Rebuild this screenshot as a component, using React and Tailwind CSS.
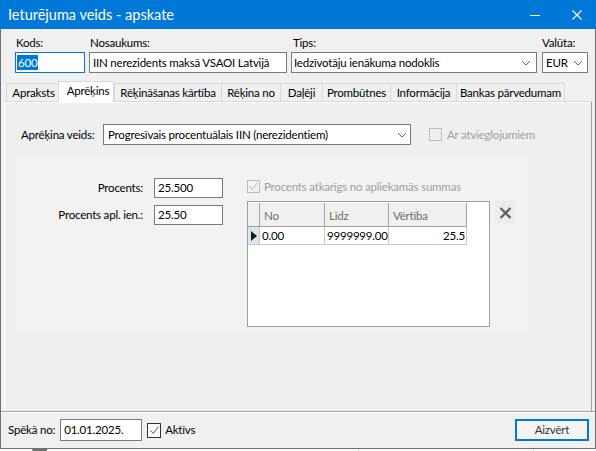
const Chevron = ({ className = "" }) => (
  <svg width="10" height="6" viewBox="0 0 10 6" className={className}>
    <path d="M1 1 L5 5 L9 1" fill="none" stroke="#606060" strokeWidth="1" />
  </svg>
);

const Check = ({ color }) => (
  <svg width="11" height="11" viewBox="0 0 11 11">
    <path d="M1.5 5.5 L4.3 8.5 L9.5 1.5" fill="none" stroke={color} strokeWidth="1" />
  </svg>
);

const tabs = [
  { t: "Apraksts", w: 54 },
  { t: "Aprēķins", w: 56, sel: true },
  { t: "Rēķināšanas kārtība", w: 107 },
  { t: "Rēķina no", w: 59 },
  { t: "Daļēji", w: 42 },
  { t: "Prombūtnes", w: 68 },
  { t: "Informācija", w: 66 },
  { t: "Bankas pārvedumam", w: 109 },
];

export default function App() {
  return (
    <div className="w-[596px] h-[451px] bg-white overflow-hidden flex flex-col whitespace-nowrap font-['Lato','Noto_Sans',sans-serif] text-[11.5px] tracking-[-0.2px] leading-[16px] text-black">
      {/* title bar */}
      <div className="h-[29px] shrink-0 bg-[#0078d7] flex items-center text-white">
        <span className="ml-[8px] text-[14.5px] tracking-normal leading-[20px]">Ieturējuma veids - apskate</span>
        <div className="ml-auto flex items-center">
          <svg width="10" height="10" viewBox="0 0 10 10" className="mr-[32px]">
            <path d="M0 5.5 H10" stroke="white" strokeWidth="1" />
          </svg>
          <svg width="10" height="10" viewBox="0 0 10 10" className="mr-[14px]">
            <path d="M0.5 0.5 L9.5 9.5 M9.5 0.5 L0.5 9.5" stroke="white" strokeWidth="1.1" />
          </svg>
        </div>
      </div>

      {/* window body */}
      <div className="h-[420px] shrink-0 flex flex-col bg-[#f0f0f0] border-x border-b border-[#707070]">
        {/* header fields */}
        <div className="flex pt-[6px] pl-[14px]">
          <div className="w-[70px] flex flex-col">
            <span className="pl-[1px] h-[17px]">Kods:</span>
            <div className="h-[21px] border border-[#0078d7] bg-white flex items-center pl-[1px]">
              <span className="bg-[#0078d7] text-white leading-[15px] px-[1px]">600</span>
            </div>
          </div>
          <div className="w-[198px] ml-[4px] flex flex-col">
            <span className="pl-[1px] h-[17px]">Nosaukums:</span>
            <div className="h-[21px] border border-[#7a7a7a] bg-white flex items-center pl-[3px]">
              IIN nerezidents maksā VSAOI Latvijā
            </div>
          </div>
          <div className="w-[246px] ml-[4px] flex flex-col">
            <span className="pl-[2px] h-[17px]">Tips:</span>
            <div className="h-[21px] border border-[#7a7a7a] bg-white flex items-center pl-[2px] pr-[5px]">
              <span>Iedzīvotāju ienākuma nodoklis</span>
              <Chevron className="ml-auto" />
            </div>
          </div>
          <div className="w-[46px] ml-[5px] flex flex-col">
            <span className="h-[17px]">Valūta:</span>
            <div className="h-[21px] border border-[#7a7a7a] bg-white flex items-center pl-[3px] pr-[4px]">
              <span>EUR</span>
              <Chevron className="ml-auto" />
            </div>
          </div>
        </div>

        {/* tabs */}
        <div className="mt-[8px] h-[20px] pl-[5px] flex items-end relative z-10">
          {tabs.map((tb, i) =>
            tb.sel ? (
              <div
                key={i}
                style={{ width: tb.w }}
                className="h-[21px] -mb-px -ml-[2px] bg-white border-x border-t border-[#d9d9d9] flex items-start justify-center pl-[4px] pt-[1px]"
              >
                {tb.t}
              </div>
            ) : (
              <div
                key={i}
                style={{ width: tb.w }}
                className="h-[18px] border-l border-t border-[#d9d9d9] last:border-r flex items-start justify-center pt-[1px]"
              >
                {tb.t}
              </div>
            )
          )}
        </div>

        {/* panel */}
        <div className="mx-[3px] border-t border-[#d9d9d9] h-[312px] flex flex-col">
          <div className="flex-1 border-l border-white border-r border-r-[#a0a0a0] bg-[#efefef] flex flex-col">
            <div className="h-px bg-white" />
            {/* Aprēķina veids row */}
            <div className="flex items-center mt-[21px] pl-[16px]">
              <span className="w-[82px]">Aprēķina veids:</span>
              <div className="w-[308px] h-[21px] border border-[#7a7a7a] bg-white flex items-center pl-[4px] pr-[3px]">
                <span>Progresīvais procentuālais IIN (nerezidentiem)</span>
                <Chevron className="ml-auto" />
              </div>
              <div className="ml-[18px] w-[13px] h-[13px] border border-[#bcbcbc]" />
              <span className="ml-[5px] text-[#a0a0a0]">Ar atvieglojumiem</span>
            </div>

            {/* group */}
            <div className="mt-[11px] ml-[11px] w-[512px] h-[177px] bg-[#f2f2f2] flex">
              <div className="w-[207px] flex flex-col pt-[22px]">
                <div className="flex items-center h-[20px]">
                  <span className="w-[127px] text-right">Procents:</span>
                  <div className="ml-[11px] w-[69px] h-[20px] border border-[#7a7a7a] bg-white flex items-center pl-[3px]">
                    25.500
                  </div>
                </div>
                <div className="flex items-center h-[20px] mt-[7px]">
                  <span className="w-[127px] text-right">Procents apl. ien.:</span>
                  <div className="ml-[11px] w-[69px] h-[20px] border border-[#7a7a7a] bg-white flex items-center pl-[3px]">
                    25.50
                  </div>
                </div>
              </div>
              <div className="ml-[24px] flex flex-col pt-[24px]">
                <div className="flex items-center h-[13px]">
                  <div className="w-[13px] h-[13px] border border-[#bcbcbc] flex items-center justify-center">
                    <Check color="#bcbcbc" />
                  </div>
                  <span className="ml-[4px] text-[#a0a0a0]">Procents atkarīgs no apliekamās summas</span>
                </div>
                <div className="flex mt-[8px]">
                  <div className="w-[243px] h-[126px] border border-[#a0a0a0] bg-white flex flex-col">
                    <div className="flex h-[24px] mt-[1px] ml-[0px]">
                      <div className="w-[12px] bg-[#f0f0f0] border-r border-[#a0a0a0] border-b" />
                      <div className="w-[65px] bg-[#f0f0f0] border-r border-b border-[#a0a0a0] pl-[4px] pt-[5px] text-[#6d6d6d]">No</div>
                      <div className="w-[64px] bg-[#f0f0f0] border-r border-b border-[#a0a0a0] pl-[4px] pt-[5px] text-[#6d6d6d]">Līdz</div>
                      <div className="w-[78px] bg-[#f0f0f0] border-r border-b border-[#a0a0a0] pl-[4px] pt-[5px] text-[#6d6d6d]">Vērtība</div>
                    </div>
                    <div className="flex h-[18px]">
                      <div className="w-[12px] bg-[#dde6ef] border-r border-b border-[#c8c8c8] flex items-center justify-center">
                        <svg width="6" height="10" viewBox="0 0 6 10">
                          <path d="M0 0 L6 5 L0 10 Z" fill="#1a1a1a" />
                        </svg>
                      </div>
                      <div className="w-[65px] border-r border-b border-[#c8c8c8] pl-[2px] flex items-center">0.00</div>
                      <div className="w-[64px] border-r border-b border-[#c8c8c8] pl-[2px] flex items-center">9999999.00</div>
                      <div className="w-[78px] border-r border-b border-[#c8c8c8] pr-[1px] flex items-center justify-end">25.5</div>
                    </div>
                  </div>
                  <div className="ml-[5px] w-[20px] h-[23px] bg-[#ececec] flex items-center justify-center">
                    <svg width="13" height="12" viewBox="0 0 13 12">
                      <path d="M1.5 1 L11.5 11 M11.5 1 L1.5 11" stroke="#646464" strokeWidth="2.4" />
                    </svg>
                  </div>
                </div>
              </div>
            </div>
          </div>
          <div className="h-px bg-[#a0a0a0] -mx-[3px]" />
          <div className="h-px bg-white -mx-[3px]" />
        </div>

        {/* footer */}
        <div className="flex items-center pl-[7px] pr-[6px] mt-[6px]">
          <span>Spēkā no:</span>
          <div className="ml-[5px] w-[82px] h-[22px] border border-[#7a7a7a] bg-white flex items-center pl-[3px]">
            01.01.2025.
          </div>
          <div className="ml-[5px] w-[14px] h-[15px] border border-[#333333] bg-white flex items-center justify-center">
            <Check color="#555555" />
          </div>
          <span className="ml-[4px]">Aktīvs</span>
          <div className="ml-auto w-[74px] h-[22px] border-2 border-[#0078d7] bg-[#f4f4f4] flex items-center justify-center text-[#333]">
            Aizvērt
          </div>
        </div>
      </div>

      {/* strip below window */}
      <div className="flex h-[2px] bg-white">
        <div className="w-[33px] border-r border-[#a0a0a0]" />
        <div className="w-[14px] bg-[#707070]" />
        <div className="w-[312px] border-r border-[#d0d0d0]" />
        <div className="w-[175px] border-r border-[#d0d0d0]" />
      </div>
    </div>
  );
}
